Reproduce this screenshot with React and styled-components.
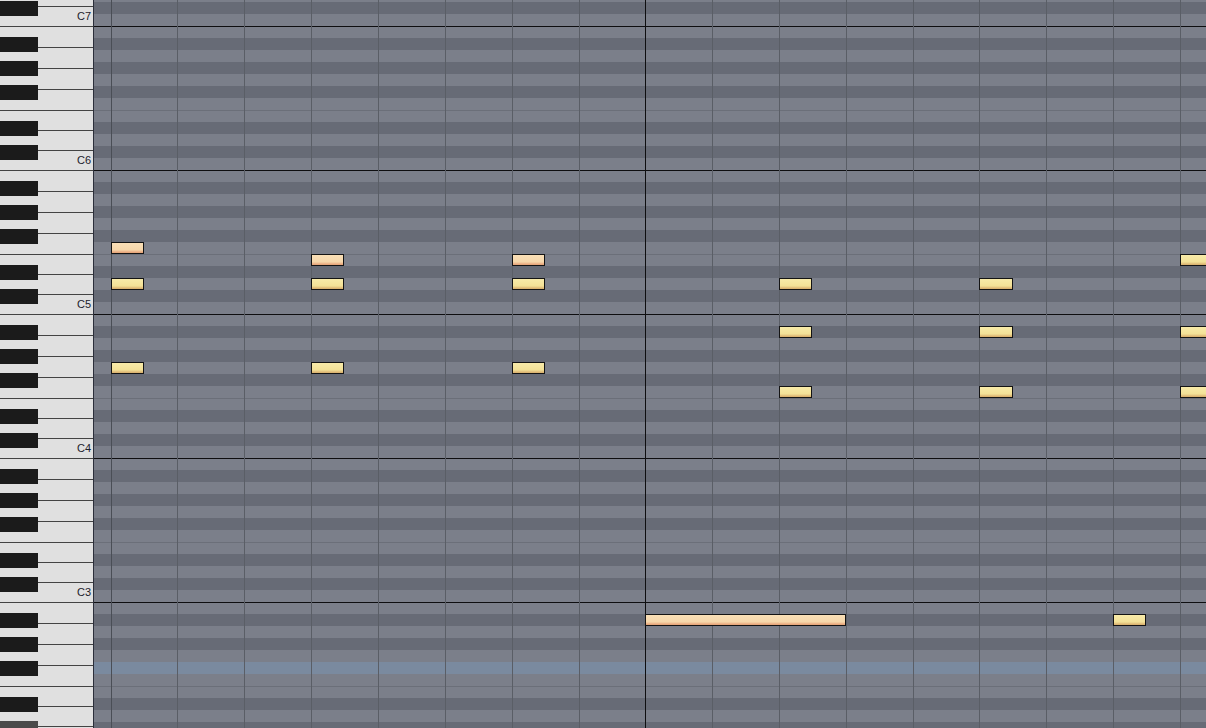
import React from "react";
import styled, { createGlobalStyle } from "styled-components";

const GlobalStyle = createGlobalStyle`
  html, body {
    margin: 0;
    padding: 0;
    background: #7b7f8a;
    overflow: hidden;
  }
  body {
    font-family: "Liberation Sans", Arial, sans-serif;
  }
`;

// x of each beat line on the page, measured from the left edge
const BEATS = [111, 177, 244, 311, 378, 445, 512, 579, 645, 712, 779, 846, 913, 979, 1046, 1113, 1180];
const GRID_LEFT = 94;
const TOP_OCTAVE = 7;
const OCTAVES = [7, 6, 5, 4, 3, 2];
const LABELLED = [7, 6, 5, 4, 3];
const BLACK = [1, 3, 6, 8, 10];

const WHITE_KEYS = [
  { name: "B", h: 21 },
  { name: "A", h: 21 },
  { name: "G", h: 21 },
  { name: "F", h: 21 },
  { name: "E", h: 20 },
  { name: "D", h: 20 },
  { name: "C", h: 20 },
];

// offsets of black keys from the top of an octave
const BLACK_KEYS = [
  { name: "A#", top: 11 },
  { name: "G#", top: 35 },
  { name: "F#", top: 59 },
  { name: "D#", top: 95 },
  { name: "C#", top: 119 },
];

const SEMI = { C: 0, "C#": 1, D: 2, "D#": 3, E: 4, F: 5, "F#": 6, G: 7, "G#": 8, A: 9, "A#": 10, B: 11 };

const notes = [
  { pitch: "F", oct: 5, beat: 0, w: 33, kind: "peach" },
  { pitch: "E", oct: 5, beat: 3, w: 33, kind: "peach" },
  { pitch: "E", oct: 5, beat: 6, w: 33, kind: "peach" },
  { pitch: "E", oct: 5, beat: 16, w: 33 },
  { pitch: "D", oct: 5, beat: 0, w: 33 },
  { pitch: "D", oct: 5, beat: 3, w: 33 },
  { pitch: "D", oct: 5, beat: 6, w: 33 },
  { pitch: "D", oct: 5, beat: 10, w: 33 },
  { pitch: "D", oct: 5, beat: 13, w: 34 },
  { pitch: "A#", oct: 4, beat: 10, w: 33 },
  { pitch: "A#", oct: 4, beat: 13, w: 34 },
  { pitch: "A#", oct: 4, beat: 16, w: 33 },
  { pitch: "G", oct: 4, beat: 0, w: 33 },
  { pitch: "G", oct: 4, beat: 3, w: 33 },
  { pitch: "G", oct: 4, beat: 6, w: 33 },
  { pitch: "F", oct: 4, beat: 10, w: 33 },
  { pitch: "F", oct: 4, beat: 13, w: 34 },
  { pitch: "F", oct: 4, beat: 16, w: 33 },
  { pitch: "A#", oct: 2, beat: 8, w: 201, kind: "peach" },
  { pitch: "A#", oct: 2, beat: 15, w: 33 },
];

const Roll = styled.div`
  display: flex;
  width: 1206px;
  height: 728px;
  overflow: hidden;
`;

const Keyboard = styled.div`
  flex: 0 0 94px;
  box-sizing: border-box;
  display: flex;
  flex-direction: column;
  margin-top: -118px;
  background: #e0e0e0;
  border-right: 1px solid #2b2e3a;
`;

const Octave = styled.div`
  position: relative;
  display: flex;
  flex-direction: column;
  flex: 0 0 144px;
`;

const WhiteKey = styled.div`
  box-sizing: border-box;
  height: ${(p) => p.$h}px;
  border-top: 1px solid #434343;
  display: flex;
  justify-content: flex-end;
  align-items: flex-end;
  padding: 0 2px 4px 0;
`;

const KeyLabel = styled.span`
  font-size: 11px;
  line-height: 11px;
  color: #1c222c;
`;

const BlackKey = styled.div`
  position: absolute;
  left: 0;
  top: ${(p) => p.$top}px;
  width: 38px;
  height: 15px;
  background: ${(p) => (p.$dim ? "#4a4a4a" : "#1b1b1b")};
`;

const Grid = styled.div`
  position: relative;
  flex: 1;
  display: flex;
  flex-direction: column;
  margin-top: -118px;
`;

const Row = styled.div`
  box-sizing: border-box;
  flex: 0 0 12px;
  background: ${(p) => (p.$hot ? "#7a8a9f" : p.$black ? "#676b76" : "#7b7f8a")};
  border-top: ${(p) =>
    p.$octave ? "1px solid #0e0e10" : p.$split ? "1px solid #6b6f79" : "none"};
`;

const BeatLines = styled.div`
  position: absolute;
  inset: 0;
  display: flex;
  padding-left: ${BEATS[0] - GRID_LEFT}px;
  pointer-events: none;
`;

const Beat = styled.div`
  flex: 0 0 ${(p) => p.$w}px;
  box-sizing: border-box;
  border-left: 1px solid ${(p) => p.$color};
`;

const Note = styled.div`
  position: absolute;
  box-sizing: border-box;
  height: 12px;
  border: 1px solid #141414;
  background: ${(p) =>
    p.$kind === "peach"
      ? "linear-gradient(#f9dfb7 0%, #f6d7aa 70%, #f0bf94 80%, #e49f74 100%)"
      : "linear-gradient(#f8eba9 0%, #f3e197 70%, #e8cc86 80%, #d7ad6b 100%)"};
`;

const rowOf = (pitch, oct) => (TOP_OCTAVE - oct) * 12 + (11 - SEMI[pitch]);

const beatColor = (i) => (i === 8 ? "#0e0e10" : i === 0 ? "#4a4e56" : "#5a5e66");

export default function App() {
  const widths = BEATS.map((x, i) => (i < BEATS.length - 1 ? BEATS[i + 1] - x : 1206 - x));

  return (
    <>
      <GlobalStyle />
      <Roll>
        <Keyboard>
          {OCTAVES.map((oct) => (
            <Octave key={oct}>
              {WHITE_KEYS.map((k) => (
                <WhiteKey key={k.name} $h={k.h}>
                  {k.name === "C" && LABELLED.includes(oct) && <KeyLabel>C{oct}</KeyLabel>}
                </WhiteKey>
              ))}
              {BLACK_KEYS.map((k) => (
                <BlackKey key={k.name} $top={k.top} $dim={oct === 2 && k.name === "C#"} />
              ))}
            </Octave>
          ))}
        </Keyboard>
        <Grid>
          {OCTAVES.map((oct) =>
            Array.from({ length: 12 }, (_, i) => {
              const semi = 11 - i;
              return (
                <Row
                  key={`${oct}-${i}`}
                  $black={BLACK.includes(semi)}
                  $octave={i === 0}
                  $split={semi === 4}
                  $hot={oct === 2 && semi === 6}
                />
              );
            })
          )}
          <BeatLines>
            {widths.map((w, i) => (
              <Beat key={i} $w={w} $color={beatColor(i)} />
            ))}
          </BeatLines>
          {notes.map((n, i) => (
            <Note
              key={i}
              $kind={n.kind}
              style={{
                left: BEATS[n.beat] - GRID_LEFT,
                top: rowOf(n.pitch, n.oct) * 12,
                width: n.w,
              }}
            />
          ))}
        </Grid>
      </Roll>
    </>
  );
}
